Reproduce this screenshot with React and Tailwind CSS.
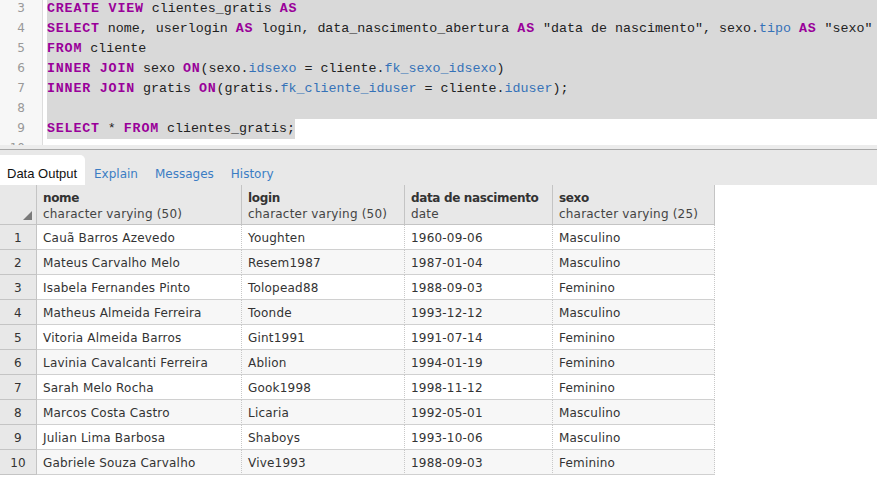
import React from 'react';

const K = ({ children }) => <span className="font-bold tracking-[0.8px] text-[#990099]">{children}</span>;
const F = ({ children }) => <span className="text-[#3572b8]">{children}</span>;

const lines = [
  { n: 3, sel: true, code: <><K>CREATE VIEW</K> clientes_gratis <K>AS</K></> },
  { n: 4, sel: true, code: <><K>SELECT</K> nome, userlogin <K>AS</K> login, data_nascimento_abertura <K>AS</K> "data de nascimento", sexo.<F>tipo</F> <K>AS</K> "sexo"</> },
  { n: 5, sel: true, code: <><K>FROM</K> cliente</> },
  { n: 6, sel: true, code: <><K>INNER JOIN</K> sexo <K>ON</K>(sexo.<F>idsexo</F> = cliente.<F>fk_sexo_idsexo</F>)</> },
  { n: 7, sel: true, code: <><K>INNER JOIN</K> gratis <K>ON</K>(gratis.<F>fk_cliente_iduser</F> = cliente.<F>iduser</F>);</> },
  { n: 8, sel: true, code: <>&nbsp;</> },
  { n: 9, sel: false, partial: true, code: <><K>SELECT</K> * <K>FROM</K> clientes_gratis;</> },
  { n: 10, sel: false, code: <>&nbsp;</> },
];

const rows = [
  ['Cauã Barros Azevedo', 'Youghten', '1960-09-06', 'Masculino'],
  ['Mateus Carvalho Melo', 'Resem1987', '1987-01-04', 'Masculino'],
  ['Isabela Fernandes Pinto', 'Tolopead88', '1988-09-03', 'Feminino'],
  ['Matheus Almeida Ferreira', 'Toonde', '1993-12-12', 'Masculino'],
  ['Vitoria Almeida Barros', 'Gint1991', '1991-07-14', 'Feminino'],
  ['Lavinia Cavalcanti Ferreira', 'Ablion', '1994-01-19', 'Feminino'],
  ['Sarah Melo Rocha', 'Gook1998', '1998-11-12', 'Feminino'],
  ['Marcos Costa Castro', 'Licaria', '1992-05-01', 'Masculino'],
  ['Julian Lima Barbosa', 'Shaboys', '1993-10-06', 'Masculino'],
  ['Gabriele Souza Carvalho', 'Vive1993', '1988-09-03', 'Feminino'],
];

const cols = [
  { name: 'nome', type: 'character varying (50)', w: 'w-[205px]' },
  { name: 'login', type: 'character varying (50)', w: 'w-[163px]' },
  { name: 'data de nascimento', type: 'date', w: 'w-[148px]' },
  { name: 'sexo', type: 'character varying (25)', w: 'w-[162px]' },
];

export default function App() {
  return (
    <div className="w-[877px] h-[481px] overflow-hidden bg-white font-['DejaVu_Sans',sans-serif]">
      {/* editor */}
      <div className="h-[145px] overflow-hidden flex">
        <div className="w-[43px] shrink-0 bg-[#f7f7f7] border-r border-[#dddddd] -mt-[2px]">
          {lines.map((l) => (
            <div key={l.n} className="h-[20px] leading-[20px] pr-[17px] text-right text-[12px] text-[#999999]">{l.n}</div>
          ))}
        </div>
        <div className="flex-1 pl-[4px] -mt-[1px] font-['Liberation_Mono',monospace] text-[13.33px] text-[#222222] whitespace-pre">
          {lines.map((l) => (
            <div key={l.n} className="h-[20px] leading-[20px]">
              <span className={l.sel ? 'block bg-[#d9d9d9]' : l.partial ? 'inline-block bg-[#d9d9d9]' : ''}>{l.code}</span>
            </div>
          ))}
        </div>
      </div>

      {/* tabs */}
      <div className="h-[4px] bg-[#ececec]" />
      <div className="h-[1px] bg-[#a8a8a8]" />
      <div className="h-[35px] bg-[#e8e8e8] flex items-end text-[12px]">
        <div className="h-[30px] w-[85px] bg-white rounded-tr-[5px] flex items-center pt-[7px] pl-[7px] text-[13px] text-[#111111] font-['Liberation_Sans',sans-serif]">Data Output</div>
        <div className="h-[30px] flex items-center pt-[7px] pl-[9px] text-[#3b7dc4]">Explain</div>
        <div className="h-[30px] flex items-center pt-[7px] pl-[17px] text-[#3b7dc4]">Messages</div>
        <div className="h-[30px] flex items-center pt-[7px] pl-[17px] text-[#3b7dc4]">History</div>
      </div>

      {/* grid */}
      <div className="text-[12px] tracking-[0.2px] text-[#333333]">
        <div className="flex h-[40px]">
          <div className="w-[37px] shrink-0 bg-[#e8e8e8] border-r border-b border-[#c4c4c4] relative">
            <div className="absolute right-[4px] bottom-[4px] w-0 h-0 border-l-[9px] border-l-transparent border-b-[9px] border-b-[#7a7a7a]" />
          </div>
          {cols.map((c) => (
            <div key={c.name} className={`${c.w} shrink-0 bg-[#e8e8e8] border-r border-b border-[#c4c4c4] pl-[6px] pt-[5px] leading-[16px]`}>
              <div className="font-bold tracking-[-0.35px] text-[#333333]">{c.name}</div>
              <div className="text-[#444444]">{c.type}</div>
            </div>
          ))}
        </div>
        {rows.map((r, i) => (
          <div key={i} className="flex h-[25px]">
            <div className="w-[37px] shrink-0 bg-[#e8e8e8] border-r border-b border-[#c4c4c4] flex items-center justify-center pt-[1px]">{i + 1}</div>
            {r.map((v, j) => (
              <div
                key={j}
                className={`${cols[j].w} shrink-0 border-b border-b-[#d0d0d0] border-r border-r-[#c8c8c8] border-dotted [border-bottom-style:solid] flex items-center pl-[6px] pt-[1px] ${i % 2 ? 'bg-[#f7f7f7]' : 'bg-white'}`}
              >
                {v}
              </div>
            ))}
          </div>
        ))}
      </div>
    </div>
  );
}
